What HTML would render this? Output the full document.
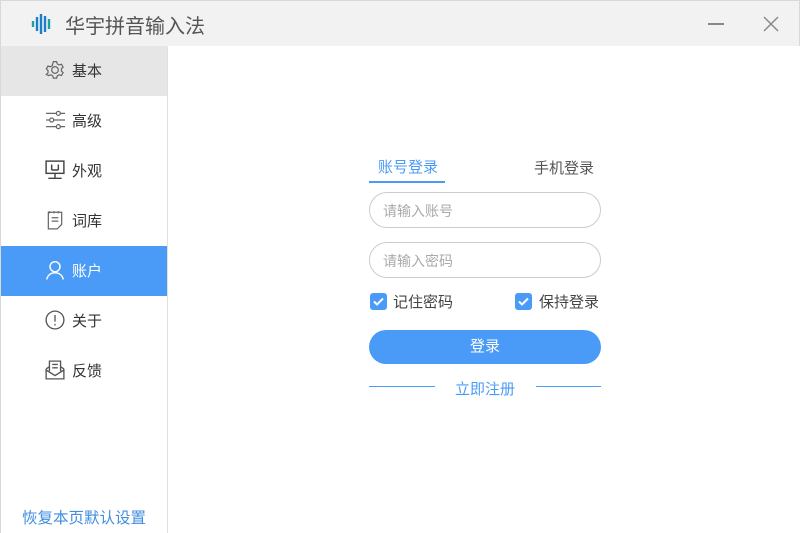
<!DOCTYPE html>
<html><head><meta charset="utf-8"><style>
*{margin:0;padding:0;box-sizing:border-box}
body{width:800px;height:533px;overflow:hidden;background:#fff;font-family:"Liberation Sans","Noto Sans CJK SC",sans-serif;position:relative}
.title{position:absolute;left:0;top:0;width:800px;height:46px;background:#f2f2f2;border:1px solid #d8d8d8;border-bottom:none}
.title .t{position:absolute;left:64px;top:9px;font-size:20px;color:#555}
.side{position:absolute;left:0;top:46px;width:168px;height:487px;border-left:1px solid #d8d8d8;border-right:1px solid #e0e0e0}
.it{position:absolute;left:0;width:166px;height:50px;font-size:15px;color:#333}
.it span{position:absolute;left:71px;top:14px}
.it svg{position:absolute;left:44px;top:14px;width:20px;height:20px}
.sel{background:#e6e6e6}
.act{background:#4a9bf8;color:#fff}
.abs{position:absolute}
.inp{position:absolute;left:369px;width:232px;height:36px;border:1px solid #ccc;border-radius:18px;font-size:14px;color:#aaa;padding:8px 0 0 13px}
.cb{position:absolute;width:17px;height:17px;background:#4a9bf8;border-radius:3px}
</style></head><body>
<div class="title">
<svg class="abs" style="left:30px;top:12px" width="24" height="22"><g stroke-width="2.4"><line x1="2" y1="8" x2="2" y2="14" stroke="#1aa3a0"/><line x1="6" y1="4" x2="6" y2="18" stroke="#1b7fc7"/><line x1="10" y1="1" x2="10" y2="21" stroke="#1b7fc7"/><line x1="14" y1="3" x2="14" y2="19" stroke="#1b7fc7"/><line x1="18" y1="6" x2="18" y2="16" stroke="#1aa3a0"/></g></svg>
<div class="t">华宇拼音输入法</div>
<div class="abs" style="left:707px;top:22px;width:16px;height:1.5px;background:#888"></div>
<svg class="abs" style="left:762px;top:15px" width="16" height="16"><path d="M1 1L15 15M15 1L1 15" stroke="#888" stroke-width="1.5"/></svg>
</div>
<div class="side">
<div class="it sel" style="top:0"><svg viewBox="0 0 18 18" fill="none" stroke="#666" stroke-width="1.1"><circle cx="9" cy="9" r="3"/><path d="M7.5 1.5h3l.5 2 1.8 1 2-.7 1.5 2.6-1.5 1.4v2.2l1.5 1.4-1.5 2.6-2-.7-1.8 1-.5 2h-3l-.5-2-1.8-1-2 .7L1.2 13l1.5-1.4V9.4L1.2 8 2.7 5.4l2 .7 1.8-1z"/></svg><span>基本</span></div>
<div class="it" style="top:50px"><svg viewBox="0 0 18 18" fill="none" stroke="#666" stroke-width="1.1"><path d="M1 3h17M1 9h17M1 15h17"/><circle cx="12" cy="3" r="1.8" fill="#fff"/><circle cx="6" cy="9" r="1.8" fill="#fff"/><circle cx="12" cy="15" r="1.8" fill="#fff"/></svg><span>高级</span></div>
<div class="it" style="top:100px"><svg viewBox="0 0 18 18" fill="none" stroke="#444" stroke-width="1.3"><rect x="1" y="1" width="16" height="11"/><path d="M6 4v5M12 4v5M6 9h6M9 12v4M3 16.5h12"/></svg><span>外观</span></div>
<div class="it" style="top:150px"><svg viewBox="0 0 18 18" fill="none" stroke="#666" stroke-width="1.1"><path d="M4 1v2M8 1v2M12 1v2M3 2h12v11l-4 4H3z"/><path d="M6 7h6M6 10h6"/></svg><span>词库</span></div>
<div class="it act" style="top:200px"><svg viewBox="0 0 18 18" fill="none" stroke="#fff" stroke-width="1.3"><circle cx="9" cy="6" r="4.5"/><path d="M1.5 17.5c1-4 4-6 7.5-6s6.5 2 7.5 6"/></svg><span>账户</span></div>
<div class="it" style="top:250px"><svg viewBox="0 0 18 18" fill="none" stroke="#555" stroke-width="1.2"><circle cx="9" cy="9" r="8"/><path d="M9 4.5v6M9 12.5v1.5"/></svg><span>关于</span></div>
<div class="it" style="top:300px"><svg viewBox="0 0 18 18" fill="none" stroke="#555" stroke-width="1.2"><path d="M1 8v9h16V8M1 8l3-2M17 8l-3-2M4 10V1h10v9M1 9l8 5 8-5M6.5 4h5M6.5 7h5"/></svg><span>反馈</span></div>
<div class="abs" style="left:21px;top:460px;font-size:15.5px;color:#3f8ee0">恢复本页默认设置</div>
</div>
<div class="abs" style="left:378px;top:156px;font-size:15px;color:#4a9bf8">账号登录</div>
<div class="abs" style="left:369px;top:181px;width:76px;height:2px;background:#4a9bf8"></div>
<div class="abs" style="left:534px;top:157px;font-size:15px;color:#555">手机登录</div>
<div class="inp" style="top:192px">请输入账号</div>
<div class="inp" style="top:242px">请输入密码</div>
<div class="cb" style="left:370px;top:293px"><svg width="17" height="17"><path d="M4 8.5l3 3 6-6" stroke="#fff" stroke-width="2" fill="none"/></svg></div>
<div class="abs" style="left:393px;top:291px;font-size:15px;color:#444">记住密码</div>
<div class="cb" style="left:515px;top:293px"><svg width="17" height="17"><path d="M4 8.5l3 3 6-6" stroke="#fff" stroke-width="2" fill="none"/></svg></div>
<div class="abs" style="left:539px;top:291px;font-size:15px;color:#444">保持登录</div>
<div class="abs" style="left:369px;top:330px;width:232px;height:34px;border-radius:17px;background:#4a9bf8;color:#fff;font-size:15px;text-align:center;line-height:34px">登录</div>
<div class="abs" style="left:369px;top:386px;width:66px;height:1px;background:#4a9bf8"></div>
<div class="abs" style="left:536px;top:386px;width:65px;height:1px;background:#4a9bf8"></div>
<div class="abs" style="left:455px;top:378px;font-size:15px;color:#4a9bf8">立即注册</div>
</body></html>
